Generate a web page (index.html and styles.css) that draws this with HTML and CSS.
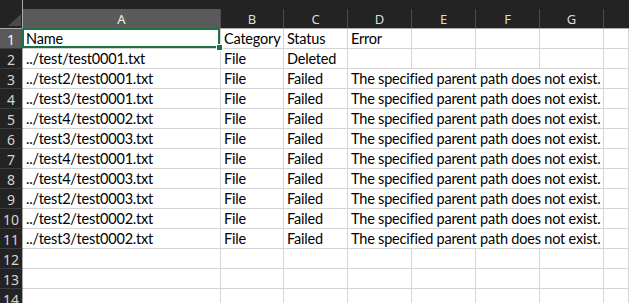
FILE: index.html
```html
<!DOCTYPE html>
<html>
<head>
<meta charset="utf-8">
<link rel="stylesheet" href="styles.css">
</head>
<body>
<div class="sheet">
  <div class="h corner"><svg class="tri" width="14" height="13" viewBox="0 0 14 13"><polygon points="13,0 13,12 0,12" fill="#4b4b4b"/></svg></div>
  <div class="h"><span class="sel">A</span></div>
  <div class="h"><span>B</span></div>
  <div class="h"><span>C</span></div>
  <div class="h"><span>D</span></div>
  <div class="h"><span>E</span></div>
  <div class="h"><span>F</span></div>
  <div class="h"><span>G</span></div>
  <div class="h"><span class="last"></span></div>

  <div class="r rsel">1</div>
  <div class="c a1">Name<div class="selbox"><div class="handle"></div></div></div>
  <div class="c">Category</div>
  <div class="c">Status</div>
  <div class="c">Error</div>
  <div class="c"></div><div class="c"></div><div class="c"></div><div class="c"></div>

  <div class="r">2</div>
  <div class="c">../test/test0001.txt</div>
  <div class="c">File</div>
  <div class="c">Deleted</div>
  <div class="c"></div><div class="c"></div><div class="c"></div><div class="c"></div><div class="c"></div>

  <div class="r">3</div>
  <div class="c">../test2/test0001.txt</div>
  <div class="c">File</div>
  <div class="c">Failed</div>
  <div class="c span4">The specified parent path does not exist.</div>
  <div class="c"></div>

  <div class="r">4</div>
  <div class="c">../test3/test0001.txt</div>
  <div class="c">File</div>
  <div class="c">Failed</div>
  <div class="c span4">The specified parent path does not exist.</div>
  <div class="c"></div>

  <div class="r">5</div>
  <div class="c">../test4/test0002.txt</div>
  <div class="c">File</div>
  <div class="c">Failed</div>
  <div class="c span4">The specified parent path does not exist.</div>
  <div class="c"></div>

  <div class="r">6</div>
  <div class="c">../test3/test0003.txt</div>
  <div class="c">File</div>
  <div class="c">Failed</div>
  <div class="c span4">The specified parent path does not exist.</div>
  <div class="c"></div>

  <div class="r">7</div>
  <div class="c">../test4/test0001.txt</div>
  <div class="c">File</div>
  <div class="c">Failed</div>
  <div class="c span4">The specified parent path does not exist.</div>
  <div class="c"></div>

  <div class="r">8</div>
  <div class="c">../test4/test0003.txt</div>
  <div class="c">File</div>
  <div class="c">Failed</div>
  <div class="c span4">The specified parent path does not exist.</div>
  <div class="c"></div>

  <div class="r">9</div>
  <div class="c">../test2/test0003.txt</div>
  <div class="c">File</div>
  <div class="c">Failed</div>
  <div class="c span4">The specified parent path does not exist.</div>
  <div class="c"></div>

  <div class="r">10</div>
  <div class="c">../test2/test0002.txt</div>
  <div class="c">File</div>
  <div class="c">Failed</div>
  <div class="c span4">The specified parent path does not exist.</div>
  <div class="c"></div>

  <div class="r">11</div>
  <div class="c">../test3/test0002.txt</div>
  <div class="c">File</div>
  <div class="c">Failed</div>
  <div class="c span4">The specified parent path does not exist.</div>
  <div class="c"></div>

  <div class="r">12</div>
  <div class="c"></div><div class="c"></div><div class="c"></div><div class="c"></div><div class="c"></div><div class="c"></div><div class="c"></div><div class="c"></div>

  <div class="r">13</div>
  <div class="c"></div><div class="c"></div><div class="c"></div><div class="c"></div><div class="c"></div><div class="c"></div><div class="c"></div><div class="c"></div>

  <div class="r">14</div>
  <div class="c"></div><div class="c"></div><div class="c"></div><div class="c"></div><div class="c"></div><div class="c"></div><div class="c"></div><div class="c"></div>
</div>
</body>
</html>
```

FILE: styles.css
```css
html, body {
  margin: 0;
  padding: 0;
  background: #ffffff;
  overflow: hidden;
}

.sheet {
  display: grid;
  grid-template-columns: 23px 198px 63px 64px 64px 64px 64px 64px 1fr;
  grid-template-rows: 29px repeat(14, 20px);
  width: 629px;
  height: 303px;
  overflow: hidden;
}

.h {
  background: #232323;
  border-bottom: 1px solid #ababab;
  display: flex;
  flex-direction: column;
  justify-content: flex-end;
  box-sizing: border-box;
}

.h span {
  height: 19px;
  display: flex;
  align-items: center;
  justify-content: center;
  border-right: 1px solid #4e4e4e;
  color: #dcdcdc;
  font-family: "Noto Sans", sans-serif;
  font-size: 13px;
  box-sizing: border-box;
  padding-top: 1px;
}

.h span.sel {
  background: #5a5a5a;
  color: #f2f2f2;
}

.h span.last {
  border-right: none;
}

.corner {
  border-right: 1px solid #ababab;
  position: relative;
  align-items: flex-end;
}

.tri {
  display: block;
  margin: 0 0 1px 0;
}

.r {
  background: #232323;
  color: #d4d4d4;
  border-right: 1px solid #ababab;
  border-bottom: 1px solid #3c3c3c;
  box-sizing: border-box;
  display: flex;
  align-items: center;
  justify-content: center;
  font-family: "Noto Sans", sans-serif;
  font-size: 14px;
  padding-top: 1px;
}

.r.rsel {
  background: #5a5a5a;
  color: #f5f5f5;
}

.c {
  border-right: 1px solid #d4d4d4;
  border-bottom: 1px solid #d4d4d4;
  box-sizing: border-box;
  display: flex;
  align-items: flex-end;
  padding: 0 2px 1px 3px;
  white-space: nowrap;
  font-family: "Lato", sans-serif;
  font-size: 14.5px;
  letter-spacing: -0.2px;
  color: #000;
  line-height: 17px;
  min-width: 0;
}

.span4 {
  grid-column: span 4;
}

.a1 {
  position: relative;
}

.selbox {
  position: absolute;
  left: -1px;
  top: -1px;
  right: 0;
  bottom: 0;
  border: 2px solid #1e7145;
  pointer-events: none;
}

.handle {
  position: absolute;
  right: -4px;
  bottom: -4px;
  width: 5px;
  height: 5px;
  background: #1e7145;
  box-shadow: 0 0 0 1px #ffffff;
}
```
